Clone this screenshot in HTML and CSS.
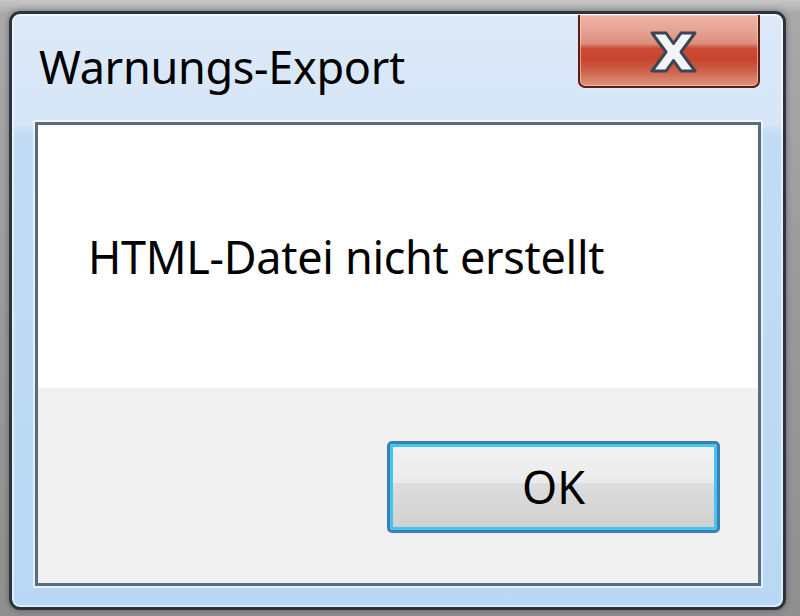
FILE: index.html
```html
<!DOCTYPE html>
<html lang="de">
<head>
<meta charset="utf-8">
<title>Warnungs-Export</title>
<link rel="stylesheet" href="styles.css">
</head>
<body>
<div class="desk">
  <div class="window">
    <div class="titlebar">
      <div class="title">Warnungs-Export</div>
      <div class="close">
        <svg class="close-x" width="49" height="44" viewBox="0 0 49 44">
          <polygon points="3,3 17,3 24.5,13.5 32,3 46,3 32,22 46,41 32,41 24.5,30.5 17,41 3,41 17,22" fill="#f3f4f6" stroke="#3a4556" stroke-width="3" stroke-linejoin="round"/>
        </svg>
      </div>
    </div>
    <div class="content">
      <div class="message">HTML-Datei nicht erstellt</div>
      <div class="actions">
        <button class="ok">OK</button>
      </div>
    </div>
  </div>
</div>
</body>
</html>
```
FILE: styles.css
```css
html, body {
  margin: 0;
  padding: 0;
}
body {
  width: 800px;
  height: 616px;
  overflow: hidden;
  background: linear-gradient(to bottom, #c6c6c6 0px, #a9a9a9 14px, #9a9a9a 300px, #8f8f8f 616px);
  font-family: "Noto Sans", "Open Sans", "DejaVu Sans", sans-serif;
}
.desk {
  padding: 11px 14px 6px 9px;
  height: 616px;
  box-sizing: border-box;
}
.window {
  height: 100%;
  box-sizing: border-box;
  border: 3px solid #2c333d;
  border-radius: 11px;
  background: linear-gradient(to bottom, #dde9f7 0px, #d6e6f8 110px, #c2dcf5 120px, #b9d7f4 600px);
  box-shadow: inset 0 0 0 2px rgba(255,255,255,0.55), 0 0 6px rgba(0,0,0,0.35);
  padding: 0 22px 21px 23px;
  display: flex;
  flex-direction: column;
}
.titlebar {
  height: 108px;
  display: flex;
  justify-content: space-between;
  align-items: flex-start;
  flex: none;
}
.title {
  margin-top: 23px;
  margin-left: 4px;
  font-size: 45px;
  line-height: 60px;
  color: #000;
  letter-spacing: -0.3px;
}
.close {
  margin-top: 1px;
  margin-right: 1px;
  width: 182px;
  height: 73px;
  box-sizing: border-box;
  border: 2px solid #5b1c14;
  border-top: 0;
  border-radius: 0 0 7px 7px;
  background: linear-gradient(to bottom, #efb4a7 0%, #e6a393 22%, #dc8f7e 40%, #cd4c35 47%, #c6432d 62%, #cc6149 78%, #df947f 100%);
  box-shadow: inset 0 0 0 1px rgba(255,220,210,0.55), 0 1px 0 #e0ecf8;
  display: flex;
  align-items: center;
  justify-content: center;
}
.close-x {
  display: block;
  margin-left: 8px;
  margin-top: 2px;
}
.content {
  flex: 1;
  border: 3px solid #5b6b7e;
  box-shadow: 0 0 0 2px rgba(255,255,255,0.6);
  display: flex;
  flex-direction: column;
  background: #f0f0f0;
}
.message {
  background: #fff;
  height: 263px;
  box-sizing: border-box;
  padding: 102px 0 0 50px;
  font-size: 45px;
  line-height: 60px;
  color: #000;
  letter-spacing: -0.3px;
}
.actions {
  flex: 1;
  display: flex;
  justify-content: flex-end;
  align-items: flex-start;
  padding: 53px 38px 0 0;
}
.ok {
  width: 333px;
  height: 92px;
  box-sizing: border-box;
  border: 3px solid #3b7fb3;
  border-radius: 5px;
  box-shadow: inset 0 0 0 3px #45c6ee;
  background: linear-gradient(to bottom, #f2f2f2 0%, #ebebeb 45%, #dddddd 46%, #d0d0d0 100%);
  font-family: "Noto Sans", "Open Sans", "DejaVu Sans", sans-serif;
  font-size: 45px;
  line-height: 50px;
  color: #000;
  padding: 0;
  margin: 0;
}
```
